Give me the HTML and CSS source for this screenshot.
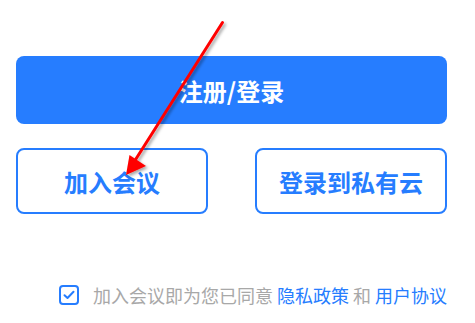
FILE: index.html
```html
<!DOCTYPE html>
<html lang="zh-CN">
<head>
    <meta charset="UTF-8">
    <meta name="viewport" content="width=device-width, initial-scale=1.0">
    <title>登录</title>
    <link rel="stylesheet" href="styles.css">
</head>
<body>
    <div class="login-panel">
        <button class="btn btn-primary">注册/登录</button>
        <div class="btn-row">
            <button class="btn btn-outline">加入会议</button>
            <button class="btn btn-outline">登录到私有云</button>
        </div>
        <div class="agreement">
            <span class="checkbox">
                <svg width="12" height="10" viewBox="0 0 12 10">
                    <path d="M1.5 5.2 L4.5 8 L10.5 1.8" fill="none" stroke="#267dff" stroke-width="2" stroke-linecap="round" stroke-linejoin="round"/>
                </svg>
            </span>
            <span class="agree-text">加入会议即为您已同意 <a href="#">隐私政策</a> 和 <a href="#">用户协议</a></span>
        </div>
    </div>

    <!-- annotation arrow drawn over the page -->
    <svg class="annotation" width="475" height="323" viewBox="0 0 475 323">
        <defs>
            <filter id="shadow" x="-20%" y="-20%" width="140%" height="140%">
                <feDropShadow dx="2" dy="2" stdDeviation="1.5" flood-color="#000" flood-opacity="0.35"/>
            </filter>
        </defs>
        <g filter="url(#shadow)">
            <line x1="222.5" y1="22.5" x2="134" y2="162" stroke="#ff0000" stroke-width="3" stroke-linecap="round"/>
            <polygon points="126,175 129.5,155 146,166" fill="#ff0000"/>
        </g>
    </svg>
</body>
</html>
```

FILE: styles.css
```css
body {
    margin: 0;
    background: #fff;
    font-family: "Noto Sans CJK SC", "Noto Sans", sans-serif;
}
.login-panel {
    width: 431px;
    margin-left: 16px;
    padding-top: 56px;
    display: flex;
    flex-direction: column;
}
.btn {
    box-sizing: border-box;
    border-radius: 8px;
    font-family: inherit;
    font-size: 24px;
    font-weight: 700;
    cursor: pointer;
    padding: 0;
}
.btn-primary {
    width: 100%;
    height: 68px;
    border: none;
    color: #fff;
    background: #267dff;
}
.btn-row {
    display: flex;
    justify-content: space-between;
    margin-top: 24px;
}
.btn-outline {
    width: 192px;
    height: 66px;
    border: 2px solid #267dff;
    background: #fff;
    color: #267dff;
}
.agreement {
    display: flex;
    align-items: center;
    justify-content: flex-end;
    gap: 14px;
    margin-top: 68px;
}
.checkbox {
    box-sizing: border-box;
    width: 20px;
    height: 20px;
    border: 2px solid #267dff;
    border-radius: 4px;
    display: flex;
    align-items: center;
    justify-content: center;
}
.agree-text {
    font-size: 18px;
    color: #a8a8a8;
    white-space: nowrap;
}
.agree-text a {
    color: #267dff;
    text-decoration: none;
}
.annotation {
    position: absolute;
    left: 0;
    top: 0;
    pointer-events: none;
}
```
